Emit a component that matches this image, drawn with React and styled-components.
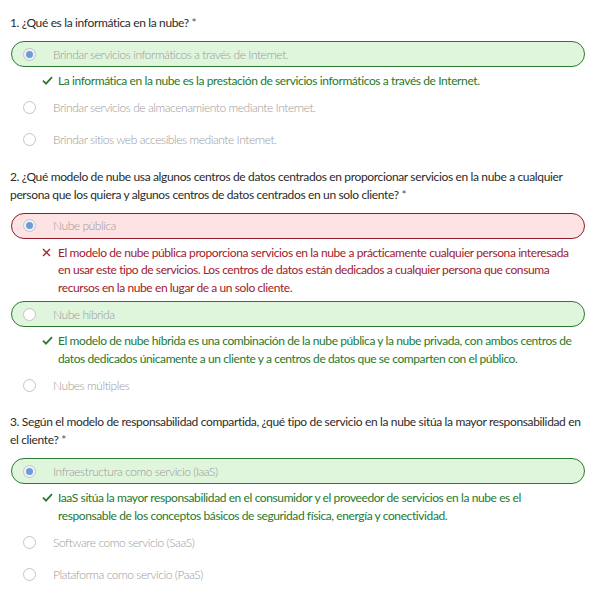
import React from 'react'
import styled, { createGlobalStyle } from 'styled-components'

const GlobalStyle = createGlobalStyle`
    body {
        margin: 0;
        background: #fff;
        font-family: Lato, "Open Sans", sans-serif;
    }
`

const questions = [
    {
        title: '1. ¿Qué es la informática en la nube?',
        options: [
            { text: 'Brindar servicios informáticos a través de Internet.', selected: true, state: 'correct', feedback: 'La informática en la nube es la prestación de servicios informáticos a través de Internet.' },
            { text: 'Brindar servicios de almacenamiento mediante Internet.' },
            { text: 'Brindar sitios web accesibles mediante Internet.' },
        ],
    },
    {
        title: '2. ¿Qué modelo de nube usa algunos centros de datos centrados en proporcionar servicios en la nube a cualquier persona que los quiera y algunos centros de datos centrados en un solo cliente?',
        options: [
            { text: 'Nube pública', selected: true, state: 'wrong', feedback: 'El modelo de nube pública proporciona servicios en la nube a prácticamente cualquier persona interesada en usar este tipo de servicios. Los centros de datos están dedicados a cualquier persona que consuma recursos en la nube en lugar de a un solo cliente.' },
            { text: 'Nube híbrida', state: 'correct', feedback: 'El modelo de nube híbrida es una combinación de la nube pública y la nube privada, con ambos centros de datos dedicados únicamente a un cliente y a centros de datos que se comparten con el público.' },
            { text: 'Nubes múltiples' },
        ],
    },
    {
        title: '3. Según el modelo de responsabilidad compartida, ¿qué tipo de servicio en la nube sitúa la mayor responsabilidad en el cliente?',
        options: [
            { text: 'Infraestructura como servicio (IaaS)', selected: true, state: 'correct', feedback: 'IaaS sitúa la mayor responsabilidad en el consumidor y el proveedor de servicios en la nube es el responsable de los conceptos básicos de seguridad física, energía y conectividad.' },
            { text: 'Software como servicio (SaaS)' },
            { text: 'Plataforma como servicio (PaaS)' },
        ],
    },
]

const CheckIcon = () => (
    <svg width="11" height="9" viewBox="0 0 11 9">
        <path d="M1 4.6 L4 7.6 L10 1.2" fill="none" stroke="#2b7a2f" strokeWidth="1.8" />
    </svg>
)

const CrossIcon = () => (
    <svg width="9" height="9" viewBox="0 0 9 9">
        <path d="M1 1 L8 8 M8 1 L1 8" fill="none" stroke="#9b2430" strokeWidth="1.3" />
    </svg>
)

const App = () => {
    return (
        <Page>
            <GlobalStyle />
            {questions.map((q) => (
                <Question key={q.title}>
                    <Title>{q.title} <Star>*</Star></Title>
                    {q.options.map((o) => (
                        <React.Fragment key={o.text}>
                            <OptionRow>
                                <OptionBox $state={o.state}>
                                    <Radio $selected={o.selected} />
                                    <OptionText>{o.text}</OptionText>
                                </OptionBox>
                            </OptionRow>
                            {o.feedback && (
                                <Feedback $state={o.state}>
                                    <FeedbackIcon>{o.state === 'wrong' ? <CrossIcon /> : <CheckIcon />}</FeedbackIcon>
                                    <span>{o.feedback}</span>
                                </Feedback>
                            )}
                        </React.Fragment>
                    ))}
                </Question>
            ))}
        </Page>
    )
}

const Page = styled.div`
    padding: 2px 14px 10px 10px;
    width: 599px;
    box-sizing: border-box;
`
const Question = styled.div`
    margin-top: 12px;
`
const Title = styled.div`
    font-size: 12px;
    line-height: 18px;
    letter-spacing: -0.35px;
    color: #2b2b2b;
    margin-bottom: 6px;
`
const Star = styled.span`
    color: #555;
`
const OptionRow = styled.div`
    height: 32px;
    display: flex;
    align-items: center;
`
const OptionBox = styled.div`
    flex: 1;
    height: 26px;
    margin-left: 1px;
    box-sizing: border-box;
    display: flex;
    align-items: center;
    padding-left: 11px;
    border-radius: 13px;
    border: 1px solid ${p => p.$state === 'correct' ? '#2b7a2f' : p.$state === 'wrong' ? '#8e1c28' : 'transparent'};
    background: ${p => p.$state === 'correct' ? '#dff5dc' : p.$state === 'wrong' ? '#fde3e4' : 'transparent'};
`
const Radio = styled.span`
    width: 13px;
    height: 13px;
    box-sizing: border-box;
    border-radius: 50%;
    border: 1px solid #c4c4c4;
    background: ${p => p.$selected ? '#eef3fa' : '#fff'};
    display: flex;
    align-items: center;
    justify-content: center;
    flex-shrink: 0;
    &::after {
        content: '';
        display: ${p => p.$selected ? 'block' : 'none'};
        width: 7px;
        height: 7px;
        border-radius: 50%;
        background: #6e9bd2;
    }
`
const OptionText = styled.span`
    margin-left: 17px;
    font-size: 12px;
    font-weight: 300;
    letter-spacing: -0.45px;
    color: #9a9a9a;
`
const Feedback = styled.div`
    display: flex;
    margin: 2px 6px 2px 32px;
    font-size: 12px;
    line-height: 17.5px;
    letter-spacing: -0.4px;
    color: ${p => p.$state === 'wrong' ? '#a0212d' : '#257a2d'};
`
const FeedbackIcon = styled.span`
    width: 16px;
    flex-shrink: 0;
    display: flex;
    align-items: flex-start;
    padding-top: 4px;
`

export default App
